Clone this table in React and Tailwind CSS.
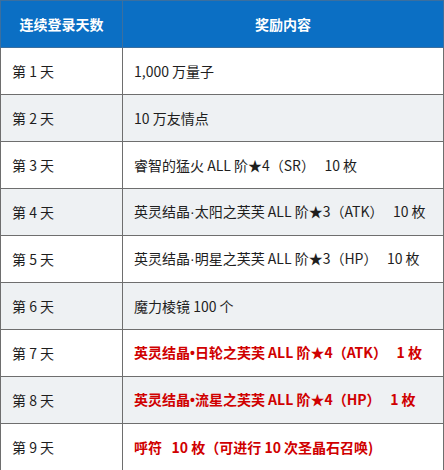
import React from "react";

const rows = [
  { day: "第 1 天", text: "1,000 万量子" },
  { day: "第 2 天", text: "10 万友情点" },
  { day: "第 3 天", text: "睿智的猛火 ALL 阶★4（SR）\u00a0\u00a0 10 枚" },
  { day: "第 4 天", text: "英灵结晶·太阳之芙芙 ALL 阶★3（ATK）\u00a0\u00a0 10 枚" },
  { day: "第 5 天", text: "英灵结晶·明星之芙芙 ALL 阶★3（HP）\u00a0\u00a0 10 枚" },
  { day: "第 6 天", text: "魔力棱镜 100 个" },
  { day: "第 7 天", text: "英灵结晶•日轮之芙芙 ALL 阶★4（ATK）\u00a0\u00a0 1 枚", red: true },
  { day: "第 8 天", text: "英灵结晶•流星之芙芙 ALL 阶★4（HP）\u00a0\u00a0 1 枚", red: true },
  { day: "第 9 天", text: "呼符\u00a0\u00a0 10 枚（可进行 10 次圣晶石召唤)", red: true },
];

function renderText(t) {
  const parts = t.split(/([·•])/);
  return parts.map((p, i) =>
    p === "·" || p === "•" ? (
      <span key={i} style={{ fontFamily: '"Liberation Sans", sans-serif' }}>
        {p}
      </span>
    ) : (
      <React.Fragment key={i}>{p}</React.Fragment>
    )
  );
}

export default function App() {
  return (
    <div
      className="w-[444px] h-[470px] bg-white overflow-hidden"
      style={{ fontFamily: '"Noto Sans CJK SC", "Noto Sans", sans-serif' }}
    >
      <table className="w-[444px] table-fixed border-collapse text-[14px]">
        <colgroup>
          <col className="w-[122px]" />
          <col />
        </colgroup>
        <thead>
          <tr className="bg-[#0b6fc4]">
            <th className="h-[47px] border border-[#3b6f9f] text-white font-bold text-center align-middle p-0">
              连续登录天数
            </th>
            <th className="h-[47px] border border-[#3b6f9f] text-white font-bold text-center align-middle p-0">
              奖励内容
            </th>
          </tr>
        </thead>
        <tbody>
          {rows.map((r, i) => (
            <tr key={i} className={i % 2 === 1 ? "bg-[#eef1f3]" : "bg-white"}>
              <td className="h-[47px] border border-[#6e6e6e] pl-[11px] pr-0 py-0 align-middle text-[#1e1e1e] whitespace-nowrap">
                {r.day}
              </td>
              <td
                className={
                  r.red
                    ? "h-[47px] border border-[#6e6e6e] pl-[11px] pr-0 py-0 align-middle text-[#d00000] font-bold whitespace-nowrap"
                    : "h-[47px] border border-[#6e6e6e] pl-[11px] pr-0 py-0 align-middle text-[#1e1e1e] whitespace-nowrap"
                }
              >
                {renderText(r.text)}
              </td>
            </tr>
          ))}
        </tbody>
      </table>
    </div>
  );
}
